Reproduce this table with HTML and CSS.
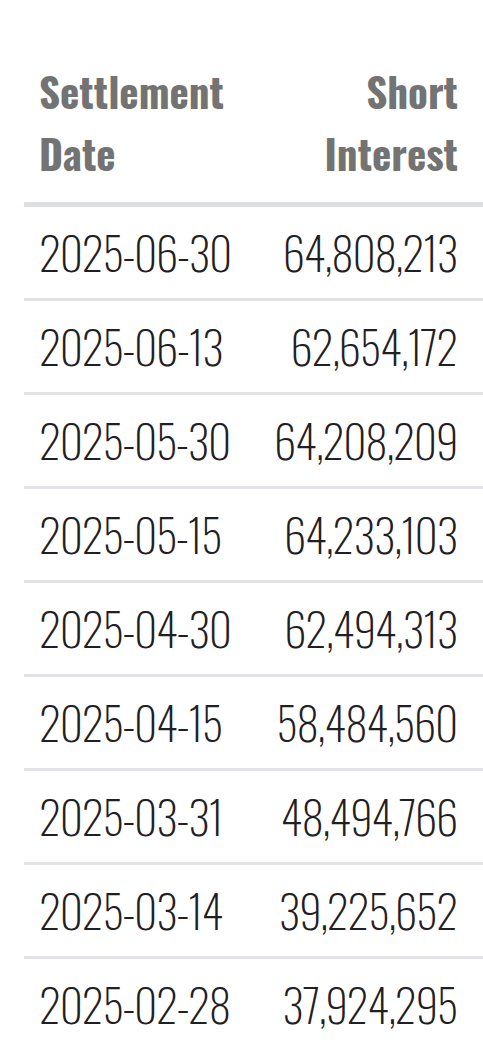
FILE: index.html
```html
<!DOCTYPE html>
<html>
<head>
<meta charset="utf-8">
<link rel="stylesheet" href="styles.css">
</head>
<body>
<table class="si-table">
  <thead>
    <tr><th class="col-date">Settlement<br>Date</th><th class="col-num">Short<br>Interest</th></tr>
  </thead>
  <tbody>
    <tr><td class="col-date">2025-06-30</td><td class="col-num">64,808,213</td></tr>
    <tr><td class="col-date">2025-06-13</td><td class="col-num">62,654,172</td></tr>
    <tr><td class="col-date">2025-05-30</td><td class="col-num">64,208,209</td></tr>
    <tr><td class="col-date">2025-05-15</td><td class="col-num">64,233,103</td></tr>
    <tr><td class="col-date">2025-04-30</td><td class="col-num">62,494,313</td></tr>
    <tr><td class="col-date">2025-04-15</td><td class="col-num">58,484,560</td></tr>
    <tr><td class="col-date">2025-03-31</td><td class="col-num">48,494,766</td></tr>
    <tr><td class="col-date">2025-03-14</td><td class="col-num">39,225,652</td></tr>
    <tr><td class="col-date">2025-02-28</td><td class="col-num">37,924,295</td></tr>
  </tbody>
</table>
</body>
</html>
```
FILE: styles.css
```css
html, body {
  margin: 0;
  padding: 0;
  background: #ffffff;
}
body {
  padding: 60px 0 0 24px;
  overflow: hidden;
}
.si-table {
  width: 459px;
  border-collapse: collapse;
  table-layout: fixed;
}
.si-table th {
  font-family: "Oswald", "Roboto Condensed", sans-serif;
  font-weight: 700;
  font-size: 41px;
  line-height: 62px;
  color: #737373;
  padding: 0 25px 18px 15px;
  border-bottom: 5px solid #dedfe3;
  vertical-align: bottom;
  white-space: nowrap;
}
.si-table td {
  font-family: "Oswald", "Roboto Condensed", sans-serif;
  font-weight: 250;
  font-size: 45px;
  letter-spacing: -1.3px;
  line-height: 60px;
  color: #1f2023;
  height: 89px;
  padding: 0 26px 2px 15px;
  border-bottom: 3px solid #e2e3e7;
  white-space: nowrap;
  vertical-align: middle;
}
.si-table tbody tr:last-child td {
  border-bottom: none;
}
.col-date { text-align: left; }
.col-num { text-align: right; }
```
